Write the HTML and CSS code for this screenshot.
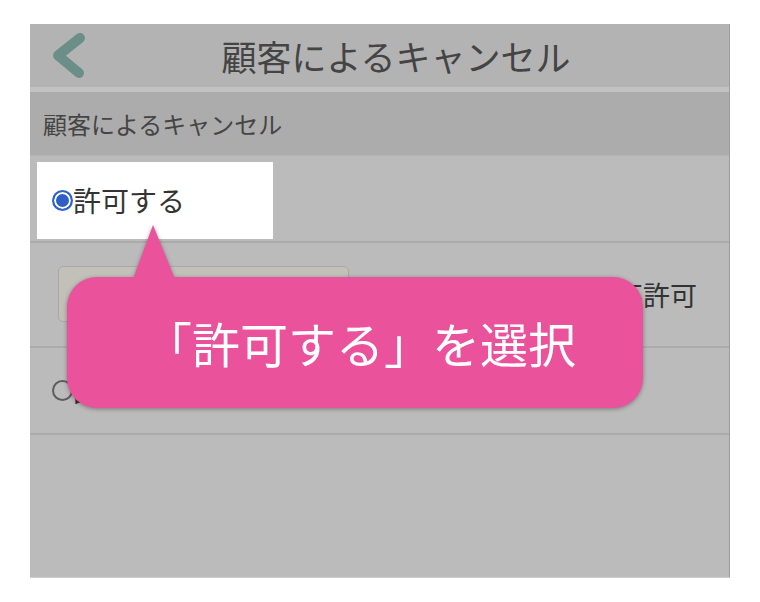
FILE: index.html
```html
<!DOCTYPE html>
<html lang="ja">
<head>
<meta charset="utf-8">
<title>顧客によるキャンセル</title>
<link rel="stylesheet" href="styles.css">
</head>
<body>
<div class="screen">
  <div class="header">
    <svg class="back" width="60" height="63" viewBox="0 0 60 63" aria-hidden="true">
      <polyline points="50,14 28,31.5 49,49" fill="none" stroke="#6b8e88" stroke-width="10" stroke-linecap="round" stroke-linejoin="round"/>
    </svg>
    <div class="title">顧客によるキャンセル</div>
  </div>
  <div class="stripe"></div>
  <div class="section">顧客によるキャンセル</div>
  <div class="row row1">
    <div class="highlight">
      <span class="radio checked"></span><span class="label">許可する</span>
    </div>
  </div>
  <div class="row row2">
    <div class="input"></div>
    <div class="right-text">不許可</div>
  </div>
  <div class="row row3">
    <span class="radio"></span><span class="label">許可しない</span>
  </div>
</div>
<div class="callout">
  <div class="bubble">「許可する」を選択</div>
</div>
</body>
</html>
```

FILE: styles.css
```css
html, body {
  margin: 0;
  padding: 0;
  background: #ffffff;
}
body {
  width: 760px;
  height: 602px;
  overflow: hidden;
  font-family: "Noto Sans CJK JP", "Noto Sans", sans-serif;
}
.screen {
  margin: 24px 0 0 30px;
  width: 699px;
  height: 553px;
  background: #bbbbbb;
  border-right: 1px solid #9c9c9c;
  border-bottom: 1px solid #cfcfcf;
  box-sizing: content-box;
}
.header {
  height: 63px;
  background: #b3b3b3;
  display: flex;
  align-items: center;
}
.back {
  flex: none;
  display: block;
}
.title {
  flex: 1;
  text-align: center;
  padding-right: 27px;
  font-size: 35px;
  line-height: 63px;
  color: #444444;
}
.stripe {
  height: 5px;
  background: #c2c2c2;
}
.section {
  height: 63px;
  line-height: 63px;
  padding-left: 13px;
  font-size: 24px;
  color: #454545;
  background: #acacac;
  border-bottom: 1px solid #b4b4b4;
}
.row {
  border-bottom: 2px solid #ababab;
  display: flex;
  align-items: center;
}
.row1 {
  height: 85px;
  align-items: flex-start;
}
.highlight {
  margin: 6px 0 0 7px;
  width: 236px;
  height: 77px;
  background: #ffffff;
  display: flex;
  align-items: center;
  padding-left: 15px;
  box-sizing: border-box;
}
.radio {
  flex: none;
  width: 21px;
  height: 21px;
  border-radius: 50%;
  box-sizing: border-box;
  border: 2px solid #5d5d5d;
}
.radio.checked {
  border-color: #2f62c9;
  background: #2d5fc7;
  box-shadow: inset 0 0 0 2px #ffffff;
}
.label {
  font-size: 28px;
  color: #333333;
  line-height: 1;
  padding-bottom: 2px;
}
.row2 {
  height: 103px;
  justify-content: space-between;
  padding: 0 32px 0 28px;
}
.input {
  width: 291px;
  height: 56px;
  margin-top: -2px;
  box-sizing: border-box;
  border: 1px solid #a9a9a2;
  border-radius: 5px;
  background: #c1c1ba;
}
.right-text {
  font-size: 27px;
  color: #333333;
}
.row3 {
  height: 85px;
  padding-left: 22px;
}
.callout {
  position: absolute;
  left: 67px;
  top: 225px;
  width: 576px;
  height: 183px;
  filter: drop-shadow(0 1px 2px rgba(0, 0, 0, 0.35));
}
.callout::before {
  content: "";
  position: absolute;
  left: 66px;
  top: 0;
  width: 42px;
  height: 54px;
  background: #ea539c;
  clip-path: polygon(20px 0, 42px 100%, 0 100%);
}
.bubble {
  position: absolute;
  left: 0;
  top: 52px;
  width: 576px;
  height: 131px;
  border-radius: 30px;
  background: #ea539c;
  color: #ffffff;
  font-size: 48px;
  line-height: 131px;
  text-align: center;
  padding-left: 10px;
  box-sizing: border-box;
}
```
